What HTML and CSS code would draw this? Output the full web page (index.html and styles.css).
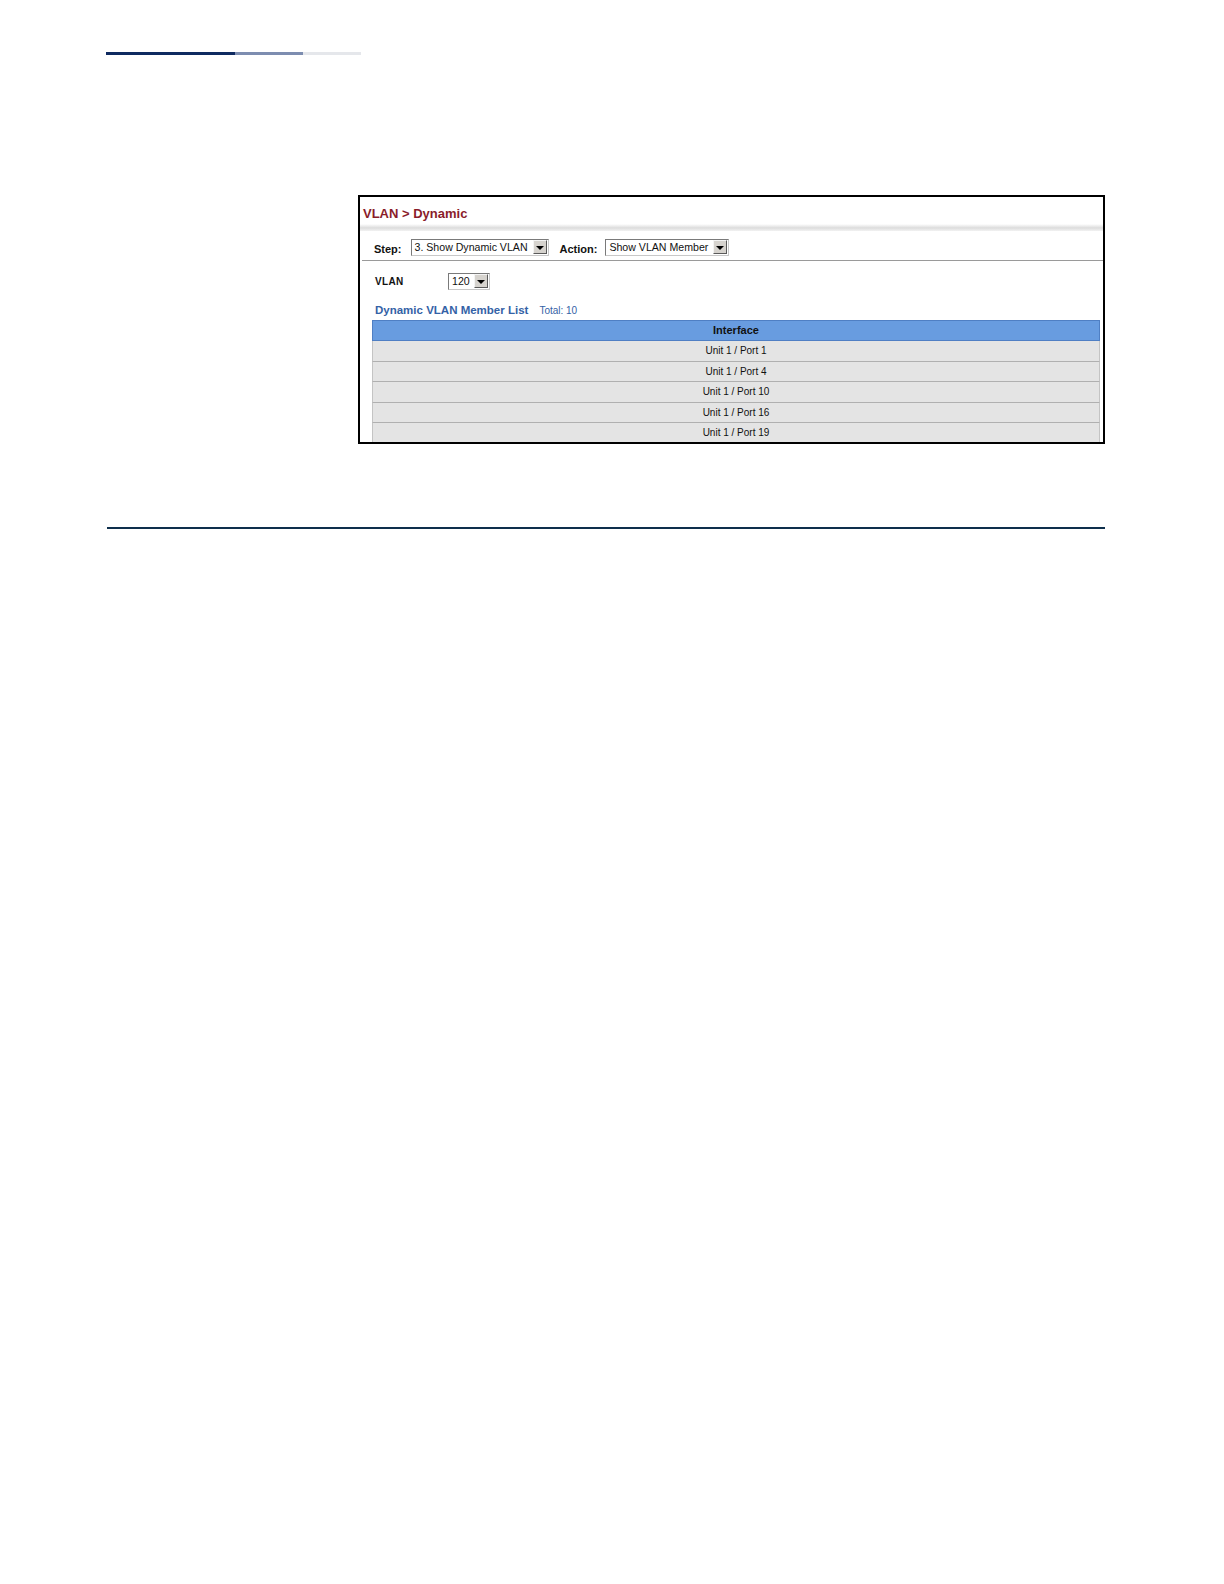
FILE: index.html
```html
<!DOCTYPE html>
<html>
<head>
<meta charset="utf-8">
<title>VLAN Dynamic</title>
<link rel="stylesheet" href="styles.css">
</head>
<body>
<div class="page">
  <div class="topbar"><span class="seg seg1"></span><span class="seg seg2"></span><span class="seg seg3"></span></div>

  <div class="shot">
    <div class="title">VLAN &gt; Dynamic</div>
    <div class="band"></div>
    <div class="steprow">
      <span class="lbl">Step:</span>
      <span class="sel sel-step"><span class="val">3. Show Dynamic VLAN</span><span class="btn"><span class="tri"></span></span></span>
      <span class="lbl lbl-action">Action:</span>
      <span class="sel sel-action"><span class="val">Show VLAN Member</span><span class="btn"><span class="tri"></span></span></span>
    </div>
    <div class="vlanrow">
      <span class="vlbl">VLAN</span>
      <span class="sel sel-vlan"><span class="val">120</span><span class="btn"><span class="tri"></span></span></span>
    </div>
    <div class="listhead">
      <span class="listtitle">Dynamic VLAN Member List</span>
      <span class="total">Total: 10</span>
    </div>
    <div class="table">
      <div class="th">Interface</div>
      <div class="td">Unit 1 / Port 1</div>
      <div class="td">Unit 1 / Port 4</div>
      <div class="td">Unit 1 / Port 10</div>
      <div class="td">Unit 1 / Port 16</div>
      <div class="td">Unit 1 / Port 19</div>
    </div>
  </div>

  <div class="rule"></div>
</div>
</body>
</html>
```

FILE: styles.css
```css
html, body {
  margin: 0;
  padding: 0;
  background: #ffffff;
}
.page {
  padding-top: 52px;
  font-family: "Liberation Sans", Arial, sans-serif;
}
.topbar {
  display: flex;
  margin-left: 106px;
  height: 3px;
}
.seg { display: block; height: 3px; }
.seg1 { width: 129px; background: #0f2a60; }
.seg2 { width: 68px; background: #7d8db0; }
.seg3 { width: 58px; background: #e5e7eb; }

.shot {
  margin-left: 358px;
  margin-top: 140px;
  width: 747px;
  height: 249px;
  box-sizing: border-box;
  border: 2px solid #000;
  overflow: hidden;
  background: #fff;
}
.title {
  height: 27px;
  padding-left: 3px;
  padding-top: 10px;
  box-sizing: border-box;
  font-size: 13px;
  font-weight: bold;
  color: #8a1c2a;
  line-height: 14px;
}
.band {
  height: 7px;
  background: linear-gradient(#ffffff, #dcdcdc 55%, #f2f2f2);
}
.steprow {
  display: flex;
  align-items: center;
  height: 30px;
  margin-left: 2px;
  padding-left: 12px;
  padding-top: 4px;
  padding-bottom: 1px;
  border-bottom: 1px solid #9a9a9a;
  box-sizing: border-box;
}
.lbl {
  font-size: 11px;
  font-weight: bold;
  color: #111;
  margin-right: 9px;
  padding-top: 3px;
}
.lbl-action { margin-left: 11px; margin-right: 8px; }
.sel {
  display: flex;
  align-items: center;
  height: 17px;
  box-sizing: border-box;
  border: 1px solid #7a7a7a;
  border-right-color: #c8c8c8;
  border-bottom-color: #c8c8c8;
  background: #fff;
  padding-left: 3px;
  padding-right: 1px;
}
.sel .val {
  font-size: 10.6px;
  color: #111;
  flex: 1;
  white-space: nowrap;
  margin-right: 2px;
}
.sel-step { width: 138px; }
.sel-action { width: 124px; }
.sel-vlan { width: 42px; }
.btn {
  width: 14px;
  height: 14px;
  box-sizing: border-box;
  background: #d6d3ce;
  border: 1px solid;
  border-color: #f4f4f4 #5a5a5a #5a5a5a #f4f4f4;
  display: flex;
  align-items: center;
  justify-content: center;
}
.tri {
  width: 0;
  height: 0;
  border-left: 4px solid transparent;
  border-right: 4px solid transparent;
  border-top: 4px solid #000;
  margin-top: 1px;
}
.vlanrow {
  display: flex;
  align-items: center;
  height: 20px;
  margin-top: 10px;
  padding-left: 15px;
}
.vlbl {
  width: 73px;
  font-size: 10px;
  font-weight: bold;
  color: #111;
  letter-spacing: 0.3px;
}
.listhead {
  display: flex;
  align-items: baseline;
  margin-top: 13px;
  padding-left: 15px;
  height: 16px;
}
.listtitle {
  font-size: 11.5px;
  font-weight: bold;
  color: #3462a6;
}
.total {
  font-size: 10px;
  color: #3462a6;
  margin-left: 11px;
}
.table {
  margin-left: 12px;
  width: 728px;
}
.th {
  height: 21px;
  box-sizing: border-box;
  background: #689ce0;
  border: 1px solid #4f7fc4;
  font-size: 11px;
  font-weight: bold;
  color: #111;
  text-align: center;
  line-height: 19px;
}
.td {
  height: 20.5px;
  box-sizing: border-box;
  background: #e4e4e4;
  border-left: 1px solid #c4c4c4;
  border-right: 1px solid #c4c4c4;
  border-bottom: 1px solid #b0b0b0;
  font-size: 10px;
  color: #111;
  text-align: center;
  line-height: 20px;
}
.rule {
  margin-left: 107px;
  margin-top: 83px;
  width: 998px;
  height: 2px;
  background: #0e2f4c;
}
```
